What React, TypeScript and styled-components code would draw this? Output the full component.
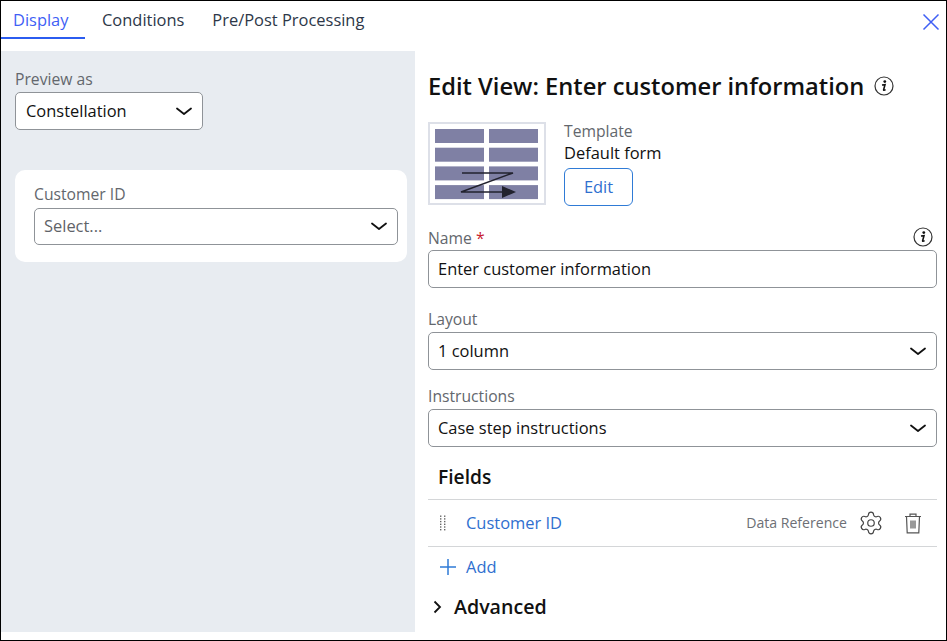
import React from "react";
import styled, { createGlobalStyle } from "styled-components";
import { Settings } from "lucide-react";

const GlobalStyle = createGlobalStyle`
  html, body {
    margin: 0;
    padding: 0;
    background: #ffffff;
  }
  * {
    box-sizing: border-box;
  }
`;

function Chevron() {
  return (
    <svg width="16" height="9" viewBox="0 0 16 9" fill="none">
      <path d="M1 1.5 L8 7 L15 1.5" stroke="#111" strokeWidth="1.8" strokeLinecap="round" strokeLinejoin="round" />
    </svg>
  );
}

function InfoIcon() {
  return (
    <svg width="20" height="20" viewBox="0 0 20 20" fill="none">
      <circle cx="10" cy="10" r="9" stroke="#333" strokeWidth="1.2" />
      <circle cx="10.8" cy="5.6" r="1.4" fill="#111" />
      <path d="M8 9 L11 8.6 L9.6 13.8 Q9.5 14.8 11.6 13.6" stroke="#111" strokeWidth="1.6" fill="none" />
    </svg>
  );
}

function TemplateThumb() {
  const rows = [0, 1, 2, 3];
  return (
    <Thumb>
      <svg width="118" height="83" viewBox="0 0 118 83">
        {rows.map((r) => (
          <g key={r} fill="#7f80a4">
            <rect x="7" y={7 + r * 18.7} width="49" height="14" />
            <rect x="61" y={7 + r * 18.7} width="49" height="14" />
          </g>
        ))}
        <path d="M34 51 H85 L33 70 H75" stroke="#22222e" strokeWidth="1.4" fill="none" />
        <path d="M74 64 L88 70 L74 76 Z" fill="#22222e" />
      </svg>
    </Thumb>
  );
}

function App() {
  return (
    <Frame>
      <GlobalStyle />
      <TabBar>
        <Tabs>
          <Tab $active>Display</Tab>
          <Tab>Conditions</Tab>
          <Tab>Pre/Post Processing</Tab>
        </Tabs>
        <CloseButton>
          <svg width="18" height="18" viewBox="0 0 18 18" fill="none">
            <path d="M1.5 1.5 L16.5 16.5 M16.5 1.5 L1.5 16.5" stroke="#3f5ff5" strokeWidth="1.5" />
          </svg>
        </CloseButton>
      </TabBar>
      <Body>
        <Preview>
          <Label>Preview as</Label>
          <PreviewSelect>
            <span>Constellation</span>
            <Chevron />
          </PreviewSelect>
          <Card>
            <Label>Customer ID</Label>
            <Select $muted>
              <span>Select...</span>
              <Chevron />
            </Select>
          </Card>
        </Preview>
        <Editor>
          <TitleRow>
            <Title>Edit View: Enter customer information</Title>
            <InfoIcon />
          </TitleRow>
          <TemplateRow>
            <TemplateThumb />
            <TemplateInfo>
              <Label>Template</Label>
              <TemplateName>Default form</TemplateName>
              <EditButton>Edit</EditButton>
            </TemplateInfo>
          </TemplateRow>
          <NameHead>
            <Label>
              Name <Required>*</Required>
            </Label>
            <InfoIcon />
          </NameHead>
          <Input>Enter customer information</Input>
          <Field>
            <Label>Layout</Label>
            <Select>
              <span>1 column</span>
              <Chevron />
            </Select>
          </Field>
          <Field>
            <Label>Instructions</Label>
            <Select>
              <span>Case step instructions</span>
              <Chevron />
            </Select>
          </Field>
          <SectionTitle>Fields</SectionTitle>
          <FieldRow>
            <Grip>
              <svg width="8" height="16" viewBox="0 0 8 16" fill="#666">
                {[0, 1, 2, 3, 4, 5].map((i) => (
                  <g key={i}>
                    <rect x="1" y={0.5 + i * 2.7} width="1.4" height="1.4" />
                    <rect x="5" y={0.5 + i * 2.7} width="1.4" height="1.4" />
                  </g>
                ))}
              </svg>
            </Grip>
            <FieldLink>Customer ID</FieldLink>
            <FieldType>Data Reference</FieldType>
            <IconSlot>
              <Settings size={26} strokeWidth={1.1} color="#444" />
            </IconSlot>
            <IconSlot>
              <svg width="18" height="21" viewBox="0 0 18 21" fill="none" stroke="#555" strokeWidth="1.2">
                <path d="M1 3.5 H17 M6 3.5 V1.2 H12 V3.5" />
                <path d="M2.5 3.5 L3.2 19.8 H14.8 L15.5 3.5" />
                <path d="M7 7.5 V15.5 M9 7.5 V15.5 M11 7.5 V15.5" />
              </svg>
            </IconSlot>
          </FieldRow>
          <AddRow>
            <svg width="18" height="18" viewBox="0 0 18 18" fill="none">
              <path d="M9 1 V17 M1 9 H17" stroke="#2f7bd6" strokeWidth="1.5" />
            </svg>
            <span>Add</span>
          </AddRow>
          <AdvancedRow>
            <svg width="9" height="14" viewBox="0 0 9 14" fill="none">
              <path d="M1.5 1.5 L7 7 L1.5 12.5" stroke="#111" strokeWidth="1.8" />
            </svg>
            <SectionLabel>Advanced</SectionLabel>
          </AdvancedRow>
        </Editor>
      </Body>
    </Frame>
  );
}

const Frame = styled.div`
  width: 947px;
  height: 641px;
  display: flex;
  flex-direction: column;
  border: 1px solid #000000;
  padding-bottom: 8px;
  background: #ffffff;
  font-family: "Open Sans", sans-serif;
  font-size: 16.45px;
  color: #111111;
  overflow: hidden;
`;

const TabBar = styled.div`
  height: 50px;
  flex-shrink: 0;
  display: flex;
  justify-content: space-between;
`;

const Tabs = styled.div`
  display: flex;
  height: 38px;
`;

const Tab = styled.div<{ $active?: boolean }>`
  height: 38px;
  width: ${(p) => (p.$active ? "84px" : "auto")};
  padding: 7px 0 0 12px;
  line-height: 24px;
  font-size: 16.45px;
  white-space: nowrap;
  color: ${(p) => (p.$active ? "#3f5ff5" : "#2d3748")};
  border-bottom: ${(p) => (p.$active ? "2px solid #2b5cf0" : "none")};
  &:nth-child(2) {
    padding-left: 17px;
    padding-right: 28px;
  }
  &:nth-child(3) {
    padding-left: 0;
  }
`;

const CloseButton = styled.div`
  padding: 12px 6px 0 0;
`;

const Body = styled.div`
  flex: 1;
  display: flex;
  min-height: 0;
`;

const Preview = styled.div`
  width: 414px;
  flex-shrink: 0;
  display: flex;
  flex-direction: column;
  align-items: flex-start;
  padding: 18px 8px 0 14px;
  background: #e8ecf1;
`;

const Label = styled.div`
  font-size: 15.7px;
  line-height: 20px;
  font-weight: 500;
  color: #63676d;
`;

const Select = styled.div<{ $muted?: boolean }>`
  width: 100%;
  height: 38px;
  display: flex;
  align-items: center;
  justify-content: space-between;
  padding: 0 10px 0 9px;
  border: 1px solid #8f9398;
  border-radius: 5px;
  background: #ffffff;
  font-size: 16.45px;
  color: ${(p) => (p.$muted ? "#5f6368" : "#111111")};
  span {
    padding-bottom: 2px;
  }
`;

const PreviewSelect = styled(Select)`
  width: 188px;
  margin-top: 3px;
  padding-left: 10px;
`;

const Card = styled.div`
  width: 100%;
  height: 92px;
  margin-top: 40px;
  padding: 14px 9px 0 19px;
  border-radius: 10px;
  background: #ffffff;
  ${Select} {
    height: 37px;
    margin-top: 4px;
  }
`;

const Editor = styled.div`
  flex: 1;
  min-width: 0;
  display: flex;
  flex-direction: column;
  padding: 17px 9px 0 13px;
`;

const TitleRow = styled.div`
  display: flex;
  align-items: center;
  gap: 10px;
  height: 36px;
`;

const Title = styled.h1`
  margin: 0;
  font-size: 23.7px;
  line-height: 36px;
  font-weight: 600;
  white-space: nowrap;
  color: #111111;
`;

const TemplateRow = styled.div`
  display: flex;
  gap: 18px;
  margin-top: 18px;
`;

const Thumb = styled.div`
  width: 118px;
  height: 83px;
  display: flex;
  background: #ffffff;
  outline: 2px solid #dde0e8;
  outline-offset: -2px;
`;

const TemplateInfo = styled.div`
  display: flex;
  flex-direction: column;
  align-items: flex-start;
  margin-top: -1px;
`;

const TemplateName = styled.div`
  font-size: 16.45px;
  line-height: 24px;
`;

const EditButton = styled.div`
  width: 69px;
  height: 38px;
  margin-top: 3px;
  padding-bottom: 2px;
  display: flex;
  align-items: center;
  justify-content: center;
  border: 1px solid #2f7bd6;
  border-radius: 6px;
  color: #2f6fcf;
  font-size: 16.45px;
`;

const NameHead = styled.div`
  display: flex;
  align-items: center;
  justify-content: space-between;
  height: 24px;
  margin-top: 19px;
  padding-right: 4px;
  ${Label} {
    margin-top: 1px;
  }
`;

const Required = styled.span`
  color: #c8202f;
`;

const Input = styled.div`
  height: 38px;
  margin-top: 1px;
  display: flex;
  align-items: center;
  padding: 0 9px 2px;
  border: 1px solid #8f9398;
  border-radius: 5px;
  font-size: 16.45px;
`;

const Field = styled.div`
  margin-top: 21px;
  display: flex;
  flex-direction: column;
  gap: 3px;
  & + & {
    margin-top: 16px;
  }
`;

const SectionTitle = styled.div`
  height: 53px;
  padding: 16px 0 0 10px;
  line-height: 28px;
  font-size: 19.2px;
  font-weight: 600;
  color: #111111;
  border-bottom: 1px solid #d4d6d8;
`;

const FieldRow = styled.div`
  height: 47px;
  display: flex;
  align-items: center;
  padding: 0 12px 0 11px;
  border-bottom: 1px solid #d4d6d8;
`;

const Grip = styled.div`
  display: flex;
  width: 27px;
`;

const FieldLink = styled.div`
  flex: 1;
  padding-bottom: 2px;
  font-size: 16.45px;
  color: #2f6fcf;
`;

const FieldType = styled.div`
  padding-bottom: 2px;
  font-size: 14.1px;
  color: #6d6f75;
  margin-right: 11px;
`;

const IconSlot = styled.div`
  display: flex;
  justify-content: center;
  width: 26px;
  & + & {
    margin-left: 17px;
    width: 24px;
  }
`;

const AddRow = styled.div`
  display: flex;
  align-items: center;
  gap: 10px;
  height: 40px;
  padding-left: 11px;
  font-size: 16.45px;
  color: #2f6fcf;
  span {
    margin-left: -1px;
    padding-bottom: 2px;
  }
`;

const AdvancedRow = styled.div`
  display: flex;
  align-items: center;
  gap: 12px;
  height: 40px;
  padding-left: 5px;
`;

const SectionLabel = styled.div`
  padding-bottom: 2px;
  font-size: 19.6px;
  font-weight: 600;
  color: #111111;
`;

export default App;
